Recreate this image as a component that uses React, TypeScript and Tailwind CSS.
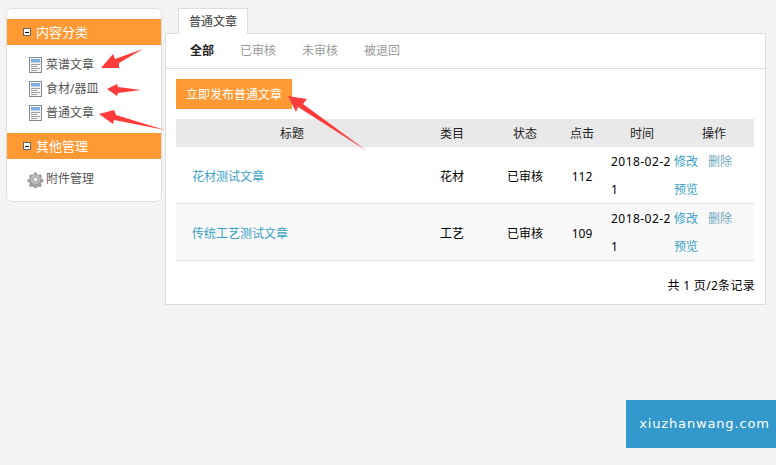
import React from "react";

const Doc = () => (
  <svg width="13" height="16" viewBox="0 0 13 16" className="shrink-0">
    <rect x="0.5" y="0.5" width="12" height="15" fill="#f4f4f2" stroke="#858a90" />
    <rect x="2" y="2" width="9" height="3.5" fill="#7fb0dc" />
    <path d="M2 7.5h9M2 9.5h6M2 11.5h9M2 13.5h6" stroke="#a0a0a0" strokeWidth="1" />
  </svg>
);

const Gear = () => (
  <svg width="17" height="17" viewBox="0 0 17 17" className="shrink-0">
    <path
      d="M7 .8h3l.5 2.1 1.5.7 1.9-1.1 2 2.1-1.1 1.8.6 1.5 2 .5v3l-2 .5-.7 1.5 1.1 1.9-2.1 2-1.8-1.1-1.5.6-.4 2H7l-.5-2-1.5-.6-1.9 1.1-2-2.1 1.1-1.8-.6-1.5-2-.5v-3l2-.5.7-1.5L1.2 4.6l2.1-2L5 3.6l1.5-.6z"
      fill="#a0a0a0"
      transform="translate(.8 .8) scale(.9)"
    />
    <circle cx="8.5" cy="8.5" r="4.6" fill="#c4c4c4" />
    <circle cx="8.5" cy="8.5" r="2.5" fill="#f2f2f2" stroke="#888" strokeWidth=".8" />
  </svg>
);

const Head = ({ children }: { children: string }) => (
  <div className="flex h-[26px] items-center bg-[#ff9933] pl-[16px] text-[13px] text-white">
    <span className="mr-[5px] flex h-[8px] w-[8px] items-center justify-center border border-[#666] bg-white">
      <span className="h-px w-[4px] bg-black" />
    </span>
    <span className="pt-[2px]">{children}</span>
  </div>
);

const Item = ({ icon, children }: { icon: React.ReactNode; children: string }) => (
  <div className="flex h-[24px] items-center gap-[4px] pl-[21px] text-[#555]">
    <span className="flex w-[14px] justify-center">{icon}</span>
    <span>{children}</span>
  </div>
);

const cols = "grid grid-cols-[232px_88px_58px_56px_64px_80px]";

const Row = ({ title, cat, hits, alt }: { title: string; cat: string; hits: string; alt?: boolean }) => (
  <div className={`${cols} h-[57px] items-center border-b border-[#e8e8e8] ${alt ? "bg-[#f9f9f9]" : "bg-white"} text-black`}>
    <a className="pl-[16px] pt-[3px] text-[#3a9fc4]">{title}</a>
    <div className="pt-[3px] text-center">{cat}</div>
    <div className="pt-[3px] text-center">已审核</div>
    <div className="pt-[3px] text-center">{hits}</div>
    <div className="break-all pl-px pt-[1px] leading-[28px] tracking-[0.45px]">2018-02-21</div>
    <div className="flex flex-wrap pt-[1px] leading-[28px] text-[#3a9fc4]">
      <a className="w-[34px]">修改</a>
      <a className="w-[34px] text-[#6ea5bd]">删除</a>
      <a className="w-[34px]">预览</a>
    </div>
  </div>
);

export default function App() {
  return (
    <div className="relative h-[465px] w-[776px] overflow-hidden bg-[#f4f4f4] font-['Noto_Sans','Noto_Sans_CJK_SC',sans-serif] text-[12px]">
      <div className="flex items-start pl-[6px] pt-[8px]">
        <aside className="h-[194px] w-[156px] rounded-[6px] border border-[#dddddd] bg-white pt-[10px]">
          <Head>内容分类</Head>
          <div className="flex h-[88px] flex-col justify-center">
            <Item icon={<Doc />}>菜谱文章</Item>
            <Item icon={<Doc />}>食材/器皿</Item>
            <Item icon={<Doc />}>普通文章</Item>
          </div>
          <Head>其他管理</Head>
          <div className="flex h-[40px] items-center">
            <div className="w-full">
              <Item icon={<Gear />}>附件管理</Item>
            </div>
          </div>
        </aside>
        <main className="ml-[3px] w-[601px]">
          <div className="relative z-10 ml-[13px] flex h-[26px] w-[70px] items-center justify-center border border-b-0 border-[#dddddd] bg-white font-medium text-[#555]">
            普通文章
          </div>
          <section className="-mt-px h-[272px] border border-[#dddddd] bg-white">
            <nav className="flex h-[35px] items-center gap-[26px] border-b border-[#dddddd] pl-[24px] text-[#999]">
              <span className="font-bold text-[#222]">全部</span>
              <span>已审核</span>
              <span>未审核</span>
              <span>被退回</span>
            </nav>
            <div className="px-[10px] pt-[10px]">
              <button className="flex h-[30px] w-[116px] items-center justify-center bg-[#ff9933] pt-[2px] text-white">
                立即发布普通文章
              </button>
              <div className={`${cols} mt-[10px] h-[28px] w-[578px] items-center bg-[#e9e9e9] pt-[1px] text-center text-[#222]`}>
                <div>标题</div>
                <div>类目</div>
                <div>状态</div>
                <div>点击</div>
                <div>时间</div>
                <div>操作</div>
              </div>
              <Row title="花材测试文章" cat="花材" hits="112" />
              <Row title="传统工艺测试文章" cat="工艺" hits="109" alt />
              <div className="pt-[16px] text-right tracking-[0.3px] text-black">共 1 页/2条记录</div>
            </div>
          </section>
        </main>
      </div>

      <svg width="776" height="465" viewBox="0 0 776 465" className="pointer-events-none absolute left-0 top-0 z-20">
        <g fill="#ff3b3b">
          <polygon points="101,68 113,54 115,59 143,49 119,63 119,68" />
          <polygon points="107,89 117,84 118,87 141,90 118,93 117,96" />
          <polygon points="99,114 114,110 116,115 165,130 114,120 113,124" />
          <polygon points="288,96 307,99 303,104 367,151 298,107 296,112" />
        </g>
      </svg>

      <div className="absolute left-[626px] top-[400px] z-20 flex h-[48px] w-[150px] items-center justify-center bg-[#3399cc] pl-[7px] font-['DejaVu_Sans',sans-serif] text-[13px] tracking-[0.85px] text-white">
        xiuzhanwang.com
      </div>
    </div>
  );
}
